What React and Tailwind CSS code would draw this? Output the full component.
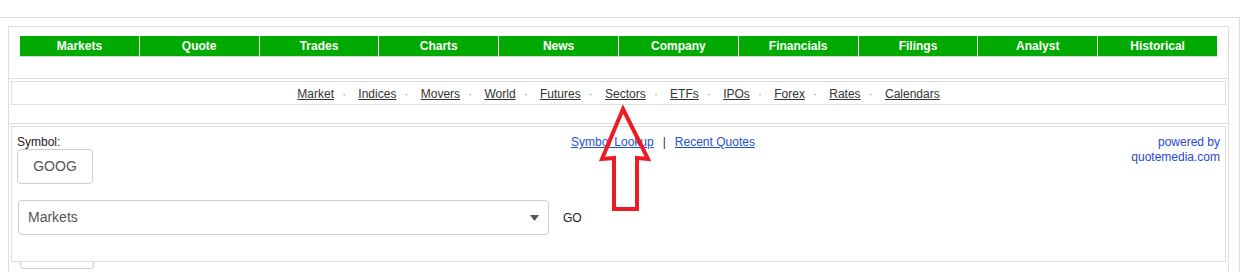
import React from 'react';

const tabs = ['Markets', 'Quote', 'Trades', 'Charts', 'News', 'Company', 'Financials', 'Filings', 'Analyst', 'Historical'];
const subLinks = ['Market', 'Indices', 'Movers', 'World', 'Futures', 'Sectors', 'ETFs', 'IPOs', 'Forex', 'Rates', 'Calendars'];

const App = () => {
  return (
    <div className="relative w-[1254px] h-[272px] overflow-hidden bg-white font-['Liberation_Sans',Arial,sans-serif] text-[#222]">
      <div className="pt-[17px]">
        {/* outer frame */}
        <div className="ml-[-1px] w-[1241px] h-[300px] border border-b-0 border-[#ddd] pt-[8px] pl-[8px]">
          <div className="w-[1221px] h-[300px] border border-b-0 border-[#ddd]">
            {/* main tabs */}
            <div className="h-[52px] border-b border-[#ddd] pt-[9px] pl-[11px]">
              <div className="flex w-[1197px] h-[21px] border-b border-[#d4d4d4]">
                {tabs.map((t, i) => (
                  <div
                    key={t}
                    className={`flex-1 h-[20px] bg-[#00aa00] flex items-center justify-center text-[12px] font-bold text-white ${i > 0 ? 'border-l border-white' : ''}`}
                  >
                    {t}
                  </div>
                ))}
              </div>
            </div>

            {/* sub nav */}
            <div className="h-[45px] border-b border-[#ddd] pt-[2px] px-[2px]">
              <div className="h-[24px] pt-[1px] border border-[#ddd] flex items-center justify-center text-[12px] leading-[14px]">
                {subLinks.map((l, i) => (
                  <React.Fragment key={l}>
                    {i > 0 && <span className="pl-[8.2px] pr-[12.2px] text-[#999]">·</span>}
                    <a href="#" className="text-[#333] underline">{l}</a>
                  </React.Fragment>
                ))}
              </div>
            </div>

            {/* symbol form */}
            <div className="pt-[2px] px-[2px]">
              <div className="h-[136px] border border-[#ddd]">
                <div className="flex">
                  <div className="w-[559px] pl-[5px] pt-[8px]">
                    <div className="text-[12px] leading-[14px] text-[#222]">Symbol:</div>
                    <div className="w-[76px] h-[35px] border border-[#ccc] rounded-[4px] flex items-center justify-center text-[14px] text-[#555]">
                      GOOG
                    </div>
                  </div>
                  <div className="pt-[8px] text-[12px] leading-[15px] flex">
                    <a href="#" className="text-[#1f4fd1] underline">Symbol Lookup</a>
                    <span className="px-[9px] text-[#333]">|</span>
                    <a href="#" className="text-[#1f4fd1] underline">Recent Quotes</a>
                  </div>
                  <div className="ml-auto pr-[5px] pt-[8px] text-right text-[12px] leading-[15px] text-[#2a46d6]">
                    <div>powered by</div>
                    <div>quotemedia.com</div>
                  </div>
                </div>
                <div className="mt-[16px] ml-[6px] flex items-center">
                  <div className="w-[531px] h-[35px] border border-[#ccc] rounded-[4px] pl-[9px] pr-[9px] flex items-center justify-between text-[14px] text-[#555]">
                    <span>Markets</span>
                    <svg width="9" height="6" viewBox="0 0 9 6">
                      <path d="M0 0 L9 0 L4.5 6 Z" fill="#555" />
                    </svg>
                  </div>
                  <span className="ml-[14px] text-[12px] text-[#222]">GO</span>
                </div>
              </div>
              <div className="ml-[9px] w-[74px] h-[7px] border border-t-0 border-[#ccc] rounded-b-[4px]" />
            </div>
          </div>
        </div>
      </div>

      {/* red annotation arrow */}
      <svg className="absolute left-0 top-0 pointer-events-none" width="1254" height="272">
        <polygon
          points="623,109 648,159 637,158 637,209 614,209 614,158 602,159"
          fill="none"
          stroke="#ed1c24"
          strokeWidth="4"
          strokeLinejoin="miter"
        />
      </svg>
    </div>
  );
};

export default App;
